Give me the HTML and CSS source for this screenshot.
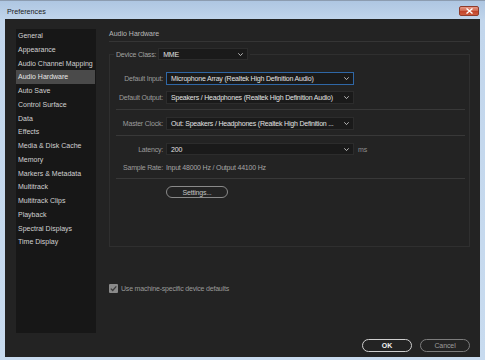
FILE: index.html
```html
<!DOCTYPE html>
<html>
<head>
<meta charset="utf-8">
<title>Preferences</title>
<link rel="stylesheet" href="styles.css">
</head>
<body>
<div class="window">
  <div class="titlebar">
    <span class="title">Preferences</span>
    <span class="close"><svg width="9" height="6" viewBox="0 0 9 6"><path d="M1.5 0.5 L7.5 5.5 M7.5 0.5 L1.5 5.5" stroke="#fff" stroke-width="1.4" fill="none"/></svg></span>
  </div>
  <div class="client">
    <div class="top">
      <ul class="sidebar">
        <li>General</li>
        <li>Appearance</li>
        <li>Audio Channel Mapping</li>
        <li class="active">Audio Hardware</li>
        <li>Auto Save</li>
        <li>Control Surface</li>
        <li>Data</li>
        <li>Effects</li>
        <li>Media &amp; Disk Cache</li>
        <li>Memory</li>
        <li>Markers &amp; Metadata</li>
        <li>Multitrack</li>
        <li>Multitrack Clips</li>
        <li>Playback</li>
        <li>Spectral Displays</li>
        <li>Time Display</li>
      </ul>
      <div class="main">
        <div class="heading">Audio Hardware</div>
        <fieldset class="group">
          <legend class="legend">
            <span class="legend-label">Device Class:</span>
            <span class="select select-small"><span>MME</span><svg class="chev" width="5" height="3" viewBox="0 0 5 3"><polyline points="0.3,0.3 2.5,2.6 4.7,0.3" fill="none" stroke="#c8c8c8" stroke-width="0.9"/></svg></span>
          </legend>
          <div class="rows">
            <div class="row row-first">
              <span class="label">Default Input:</span>
              <span class="select focus"><span>Microphone Array (Realtek High Definition Audio)</span><svg class="chev" width="5" height="3" viewBox="0 0 5 3"><polyline points="0.3,0.3 2.5,2.6 4.7,0.3" fill="none" stroke="#c8c8c8" stroke-width="0.9"/></svg></span>
            </div>
            <div class="row">
              <span class="label">Default Output:</span>
              <span class="select"><span>Speakers / Headphones (Realtek High Definition Audio)</span><svg class="chev" width="5" height="3" viewBox="0 0 5 3"><polyline points="0.3,0.3 2.5,2.6 4.7,0.3" fill="none" stroke="#c8c8c8" stroke-width="0.9"/></svg></span>
            </div>
            <div class="sep"></div>
            <div class="row row-after-sep">
              <span class="label">Master Clock:</span>
              <span class="select"><span>Out: Speakers / Headphones (Realtek High Definition ...</span><svg class="chev" width="5" height="3" viewBox="0 0 5 3"><polyline points="0.3,0.3 2.5,2.6 4.7,0.3" fill="none" stroke="#c8c8c8" stroke-width="0.9"/></svg></span>
            </div>
            <div class="sep"></div>
            <div class="row row-after-sep row-short">
              <span class="label">Latency:</span>
              <span class="select"><span>200</span><svg class="chev" width="5" height="3" viewBox="0 0 5 3"><polyline points="0.3,0.3 2.5,2.6 4.7,0.3" fill="none" stroke="#c8c8c8" stroke-width="0.9"/></svg></span>
              <span class="unit">ms</span>
            </div>
            <div class="row row-short">
              <span class="label">Sample Rate:</span>
              <span class="value">Input 48000 Hz / Output 44100 Hz</span>
            </div>
            <div class="sep"></div>
            <div class="row row-after-sep row-short">
              <span class="label"></span>
              <span class="btn btn-settings">Settings...</span>
            </div>
          </div>
        </fieldset>
        <label class="check">
          <span class="box"><svg width="9" height="9" viewBox="0 0 9 9"><polyline points="1.8,4.6 3.7,6.5 7.3,2.3" fill="none" stroke="#3c3c3c" stroke-width="1.3"/></svg></span>
          <span class="check-text">Use machine-specific device defaults</span>
        </label>
      </div>
    </div>
    <div class="footer">
      <span class="btn btn-ok">OK</span>
      <span class="btn btn-cancel">Cancel</span>
    </div>
  </div>
</div>
</body>
</html>
```

FILE: styles.css
```css
html, body {
  margin: 0;
  padding: 0;
  width: 485px;
  height: 360px;
  overflow: hidden;
  background: #c6d9ee;
}

.window {
  display: flex;
  flex-direction: column;
  width: 485px;
  height: 360px;
  background: linear-gradient(to bottom, #aec6e2 0px, #c2d6ec 20px, #c8dbef 100%);
  font-family: "Liberation Sans", Arial, sans-serif;
  font-size: 7px;
  box-sizing: border-box;
  border-top: 1px solid #8c9cb0;
}

.titlebar {
  display: flex;
  align-items: flex-start;
  justify-content: space-between;
  height: 18px;
  padding: 0 6px 0 7px;
}

.title {
  color: #1a1a1a;
  font-size: 7.2px;
  line-height: 9px;
  margin-top: 6px;
}

.close {
  display: flex;
  align-items: center;
  justify-content: center;
  width: 20px;
  height: 10px;
  margin-top: 5px;
  box-sizing: border-box;
  border: 1px solid #8e3b2b;
  border-radius: 2px;
  background: linear-gradient(to bottom, #e79a88 0%, #d06a52 45%, #c1432a 55%, #cf5c3f 100%);
}

.client {
  flex: 1;
  display: flex;
  flex-direction: column;
  margin: 0 5px 3px 5px;
  padding: 10px 10px 5px 11px;
  background: #232323;
}

.top {
  display: flex;
  gap: 13px;
  height: 304px;
}

.sidebar {
  list-style: none;
  margin: 0;
  padding: 0;
  width: 80px;
  height: 304px;
  background: #171717;
}

.sidebar li {
  height: 13.75px;
  line-height: 13.75px;
  padding-left: 2px;
  margin-right: 1px;
  color: #d2d2d2;
  white-space: nowrap;
}

.sidebar li.active {
  background: #4a4a4a;
  color: #e6e6e6;
}

.main {
  flex: 1;
  display: flex;
  flex-direction: column;
  letter-spacing: -0.2px;
}

.heading {
  line-height: 10px;
  padding-bottom: 2px;
  border-bottom: 1px solid #353535;
  color: #b8b8b8;
  letter-spacing: 0;
}

.group {
  margin: 6px 0 0 0;
  padding: 0 0 48px 0;
  border: 1px solid #2f2f2f;
  min-width: 0;
}

.legend {
  display: flex;
  align-items: center;
  margin-left: 4px;
  padding: 0 2px;
  height: 12px;
}

.legend-label {
  color: #a2a2a2;
  margin-right: 2px;
}

.select {
  display: flex;
  align-items: center;
  justify-content: space-between;
  box-sizing: border-box;
  width: 188px;
  height: 13px;
  padding: 0 4px 0 4px;
  background: #1a1a1a;
  border: 1px solid #2c2c2c;
  color: #e2e2e2;
  white-space: nowrap;
  overflow: hidden;
}

.select-small {
  width: 90px;
  height: 12px;
}

.select.focus {
  border-color: #2f67a6;
}

.chev {
  flex: none;
  margin-left: 4px;
}

.rows {
  display: flex;
  flex-direction: column;
  padding-top: 12px;
}

.row {
  display: flex;
  align-items: center;
  height: 13px;
  margin-top: 6px;
}

.row-first {
  margin-top: 0;
}

.row-short {
  height: 12px;
}

.row-short .select {
  height: 12px;
}

.row-after-sep {
  margin-top: 7px;
}

.label {
  flex: none;
  width: 53px;
  margin-right: 3px;
  text-align: right;
  color: #9c9c9c;
  white-space: nowrap;
}

.value {
  color: #a6a6a6;
  white-space: nowrap;
}

.unit {
  color: #8e8e8e;
  margin-left: 4px;
}

.sep {
  height: 1px;
  margin: 5px 4px 0 6px;
  background: #383838;
}

.btn {
  display: flex;
  align-items: center;
  justify-content: center;
  box-sizing: border-box;
  height: 13px;
  border-radius: 7px;
  white-space: nowrap;
}

.btn-settings {
  width: 62px;
  height: 12px;
  border: 1px solid #8a8a8a;
  color: #c2c2c2;
}

.check {
  display: flex;
  align-items: center;
  margin-top: 36px;
  height: 10px;
}

.box {
  display: flex;
  width: 9px;
  height: 9px;
  background: #8a8a8a;
  border-radius: 1px;
  margin-right: 3px;
}

.check-text {
  color: #9a9a9a;
}

.footer {
  display: flex;
  justify-content: flex-end;
  gap: 8px;
  margin-top: 6px;
  letter-spacing: -0.1px;
}

.btn-ok {
  width: 50px;
  border: 1px solid #cfcfcf;
  color: #f0f0f0;
  font-weight: bold;
}

.btn-cancel {
  width: 50px;
  border: 1px solid #7c7c7c;
  color: #9c9c9c;
}
```
